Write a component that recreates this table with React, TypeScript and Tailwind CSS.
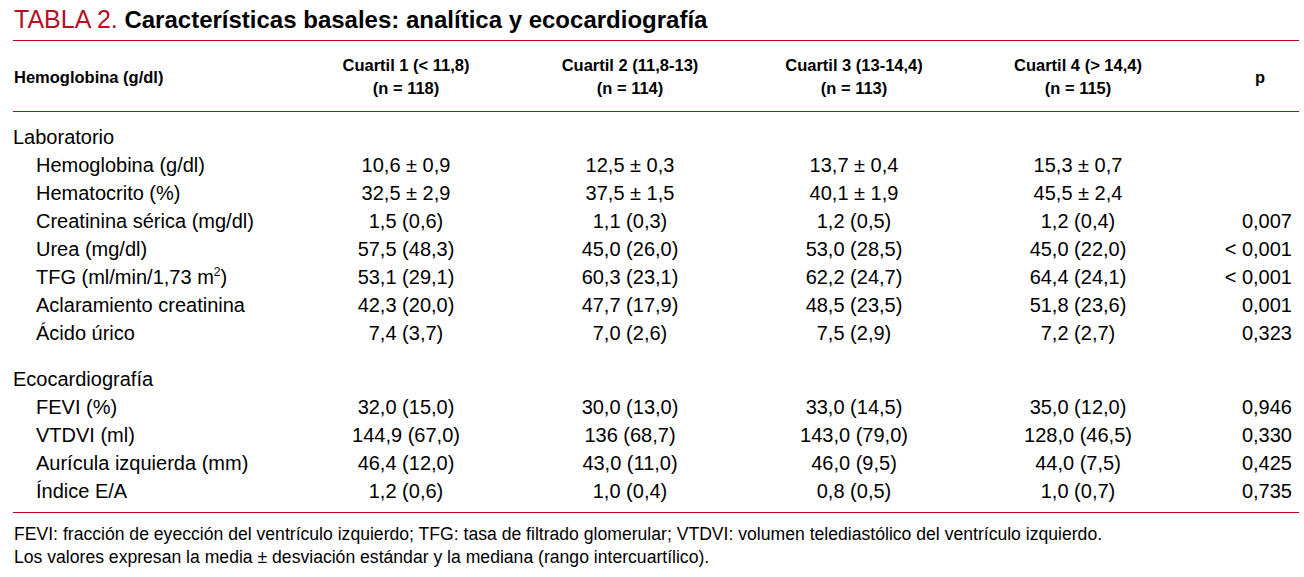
type Row = { label: React.ReactNode; values: string[]; p?: string };

const laboratorio: Row[] = [
  { label: "Hemoglobina (g/dl)", values: ["10,6 ± 0,9", "12,5 ± 0,3", "13,7 ± 0,4", "15,3 ± 0,7"] },
  { label: "Hematocrito (%)", values: ["32,5 ± 2,9", "37,5 ± 1,5", "40,1 ± 1,9", "45,5 ± 2,4"] },
  { label: "Creatinina sérica (mg/dl)", values: ["1,5 (0,6)", "1,1 (0,3)", "1,2 (0,5)", "1,2 (0,4)"], p: "0,007" },
  { label: "Urea (mg/dl)", values: ["57,5 (48,3)", "45,0 (26,0)", "53,0 (28,5)", "45,0 (22,0)"], p: "< 0,001" },
  {
    label: (
      <>
        TFG (ml/min/1,73 m<sup className="text-[12px] -top-[8px]">2</sup>)
      </>
    ),
    values: ["53,1 (29,1)", "60,3 (23,1)", "62,2 (24,7)", "64,4 (24,1)"],
    p: "< 0,001",
  },
  { label: "Aclaramiento creatinina", values: ["42,3 (20,0)", "47,7 (17,9)", "48,5 (23,5)", "51,8 (23,6)"], p: "0,001" },
  { label: "Ácido úrico", values: ["7,4 (3,7)", "7,0 (2,6)", "7,5 (2,9)", "7,2 (2,7)"], p: "0,323" },
];

const eco: Row[] = [
  { label: "FEVI (%)", values: ["32,0 (15,0)", "30,0 (13,0)", "33,0 (14,5)", "35,0 (12,0)"], p: "0,946" },
  { label: "VTDVI (ml)", values: ["144,9 (67,0)", "136 (68,7)", "143,0 (79,0)", "128,0 (46,5)"], p: "0,330" },
  { label: "Aurícula izquierda (mm)", values: ["46,4 (12,0)", "43,0 (11,0)", "46,0 (9,5)", "44,0 (7,5)"], p: "0,425" },
  { label: "Índice E/A", values: ["1,2 (0,6)", "1,0 (0,4)", "0,8 (0,5)", "1,0 (0,7)"], p: "0,735" },
];

const cols = "grid grid-cols-[281px_224px_224px_224px_224px_109px]";

function DataRow({ row }: { row: Row }) {
  return (
    <div className={`${cols} leading-[28px]`}>
      <div className="pl-[23px] whitespace-nowrap">{row.label}</div>
      {row.values.map((v, i) => (
        <div key={i} className="text-center whitespace-nowrap">
          {v}
        </div>
      ))}
      <div className="text-right pr-[7px] whitespace-nowrap">{row.p ?? ""}</div>
    </div>
  );
}

export default function App() {
  return (
    <div
      className="bg-white w-[1304px] h-[577px] text-black overflow-hidden"
      style={{ fontFamily: '"Liberation Sans", Arial, sans-serif' }}
    >
      <h1 className="pl-[14px] pt-[5px] text-[24px] leading-[28px] font-bold whitespace-nowrap">
        <span className="font-normal text-[25px] text-[#b3121f]">TABLA 2.</span> Características basales: analítica y
        ecocardiografía
      </h1>

      <div className="ml-[13px] w-[1286px] mt-[6px]">
        {/* cabecera */}
        <div className={`${cols} items-center border-y border-[#b5001b] pt-[13px] pb-[11px] text-[16.5px] font-bold leading-[23px]`}>
          <div className="pl-[1px] whitespace-nowrap">Hemoglobina (g/dl)</div>
          <div className="text-center">
            Cuartil 1 (&lt; 11,8)
            <br />
            (n = 118)
          </div>
          <div className="text-center">
            Cuartil 2 (11,8-13)
            <br />
            (n = 114)
          </div>
          <div className="text-center">
            Cuartil 3 (13-14,4)
            <br />
            (n = 113)
          </div>
          <div className="text-center">
            Cuartil 4 (&gt; 14,4)
            <br />
            (n = 115)
          </div>
          <div className="text-right pr-[34px]">p</div>
        </div>

        <div className="text-[20px] pt-[11px] pb-[7px] border-b border-[#b5001b]">
          <div className="leading-[28px]">Laboratorio</div>
          {laboratorio.map((r, i) => (
            <DataRow key={i} row={r} />
          ))}
          <div className="leading-[28px] mt-[18px]">Ecocardiografía</div>
          {eco.map((r, i) => (
            <DataRow key={i} row={r} />
          ))}
        </div>

        <div className="pt-[10px] pl-[1px] text-[17.6px] leading-[23px] whitespace-nowrap">
          <p>
            FEVI: fracción de eyección del ventrículo izquierdo; TFG: tasa de filtrado glomerular; VTDVI: volumen
            telediastólico del ventrículo izquierdo.
          </p>
          <p>Los valores expresan la media ± desviación estándar y la mediana (rango intercuartílico).</p>
        </div>
      </div>
    </div>
  );
}
